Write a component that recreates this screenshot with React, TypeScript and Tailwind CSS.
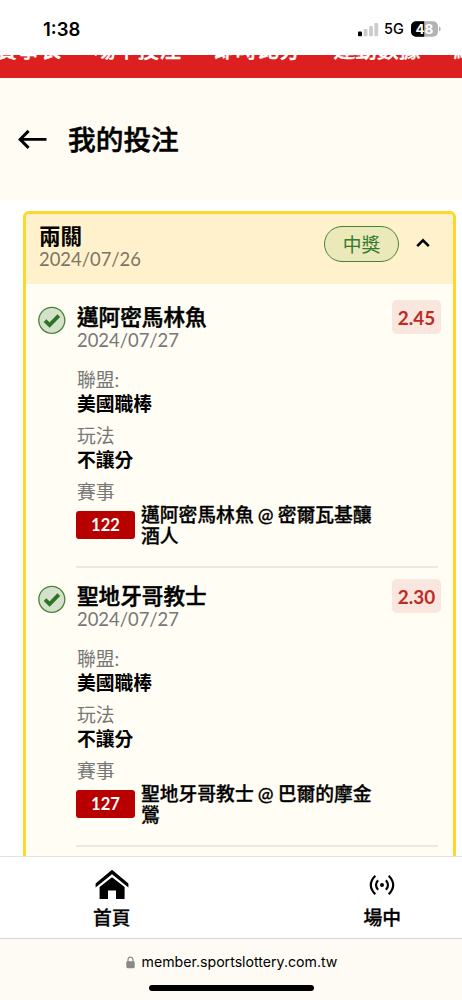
/**
 * MyBetsPage
 * Bet slip history, shown inside the mobile browser frame
 */

import React from 'react';

interface BetLeg {
  id: string;
  pick: string;
  date: string;
  odds: string;
  league: string;
  market: string;
  gameNo: string;
  match: string;
}

const LEGS: BetLeg[] = [
  {
    id: 'leg-122',
    pick: '邁阿密馬林魚',
    date: '2024/07/27',
    odds: '2.45',
    league: '美國職棒',
    market: '不讓分',
    gameNo: '122',
    match: '邁阿密馬林魚 @ 密爾瓦基釀酒人',
  },
  {
    id: 'leg-127',
    pick: '聖地牙哥教士',
    date: '2024/07/27',
    odds: '2.30',
    league: '美國職棒',
    market: '不讓分',
    gameNo: '127',
    match: '聖地牙哥教士 @ 巴爾的摩金鶯',
  },
];

const NAV_ITEMS = ['賽事表', '場中投注', '即時比分', '運動數據', '網站公告'];

const StatusBar: React.FC = () => (
  <div className="h-[55px] shrink-0 bg-white flex items-start justify-between pl-[43px] pr-[21px] pt-[18px] font-[family-name:Inter,sans-serif]">
    <span className="text-[18.5px] leading-[23px] font-semibold text-black">1:38</span>
    <div className="flex items-center h-[22px]">
      <svg width="21" height="15" viewBox="0 0 21 15">
        <rect x="0" y="9.5" width="4" height="4.7" rx="1" fill="#000" />
        <rect x="5.7" y="7" width="3.8" height="7.2" rx="1" fill="#ccc" />
        <rect x="11.1" y="4" width="3.8" height="10.2" rx="1" fill="#ccc" />
        <rect x="16.4" y="1" width="3.8" height="13.2" rx="1" fill="#ccc" />
      </svg>
      <span className="ml-[5px] w-[21px] text-[14.5px] leading-[20px] font-medium text-black">5G</span>
      <svg className="ml-[6px]" width="30" height="16" viewBox="0 0 30 16">
        <rect x="0" y="0.3" width="27" height="15.4" rx="5" fill="#b3b3b3" />
        <path d="M5 .3h8.2v15.4H5a5 5 0 0 1-5-5V5.3a5 5 0 0 1 5-5Z" fill="#000" />
        <path d="M28 5.5q1.7 .8 1.7 2.5t-1.7 2.5Z" fill="#b3b3b3" />
        <text x="13.4" y="12.9" textAnchor="middle" fontSize="13.5" fontWeight="700" fill="#fff">
          48
        </text>
      </svg>
    </div>
  </div>
);

const SiteNav: React.FC = () => (
  <div className="h-[23px] shrink-0 bg-[#dc2020] overflow-hidden">
    <div className="-mt-[19px] -ml-[4px] flex gap-[33px] text-[21.7px] leading-[26px] font-medium text-white whitespace-nowrap [-webkit-text-stroke:0.4px]">
      {NAV_ITEMS.map((item) => (
        <span key={item}>{item}</span>
      ))}
    </div>
  </div>
);

const PageTitle: React.FC = () => (
  <div className="h-[122px] shrink-0 bg-[#fffcf3] flex items-center pl-[18px]">
    <svg width="29" height="22" viewBox="0 0 29 22" fill="none" stroke="#000" strokeWidth="2.9">
      <path d="M28.5 11.4H2M10.6 2.9 2.1 11.4l8.5 8.5" />
    </svg>
    <h1 className="ml-[21px] text-[27.7px] leading-[36px] pt-[1px] font-medium text-black [-webkit-text-stroke:0.5px]">我的投注</h1>
  </div>
);

const CheckBadge: React.FC = () => (
  <svg className="mt-[22px] shrink-0" width="28" height="28" viewBox="0 0 28 28" fill="none">
    <circle cx="13.8" cy="14.3" r="13" fill="#d5e2cb" stroke="#44843a" strokeWidth="1.3" />
    <path d="m7 14.6 4.6 4.4 9.2-9.4" stroke="#2c7421" strokeWidth="3.8" />
  </svg>
);

const Field: React.FC<{ label: string; children: React.ReactNode }> = ({ label, children }) => (
  <div className="h-[56px]">
    <div className="h-[23px] text-[18.8px] leading-[22px] text-[#777]">{label}</div>
    <div className="h-[23px] text-[18.8px] leading-[23px] font-bold text-black">{children}</div>
  </div>
);

const BetLegRow: React.FC<{ leg: BetLeg }> = ({ leg }) => (
  <div className="flex h-[279px] pl-[12px] pr-[12px]">
    <CheckBadge />
    <div className="ml-[10px] w-[362px] h-[284px] shrink-0 pt-[20px]">
      <div className="flex justify-between h-[65px]">
        <div className="pl-[1px]">
          <div className="h-[25px] text-[21.6px] leading-[26px] font-medium text-black [-webkit-text-stroke:0.5px]">{leg.pick}</div>
          <div className="h-[22px] text-[18.4px] leading-[22px] text-[#777]">{leg.date}</div>
        </div>
        <div className="-mt-[4px] -mr-[3px] w-[49px] h-[34px] rounded-[5px] bg-[#f8e6df] text-center text-[18.9px] leading-[35px] font-bold text-[#bd2b23]">
          {leg.odds}
        </div>
      </div>
      <div className="pl-[1px]">
        <Field label="聯盟:">{leg.league}</Field>
        <Field label="玩法">{leg.market}</Field>
        <div className="h-[23px] text-[18.8px] leading-[22px] text-[#777]">賽事</div>
      </div>
      <div className="flex h-[64px] border-b-2 border-[#ece8e3]">
        <div className="mt-[7px] w-[59px] h-[28px] shrink-0 rounded-[3px] bg-[#b90000] text-center text-[16.6px] leading-[28px] font-bold text-white">
          {leg.gameNo}
        </div>
        <div className="ml-[6px] mt-[1px] w-[240px] text-[18.8px] leading-[20.5px] font-medium text-black break-all [word-spacing:-0.6px] [-webkit-text-stroke:0.3px]">
          {leg.match}
        </div>
      </div>
    </div>
  </div>
);

const BetCard: React.FC = () => (
  <div className="mt-[11px] ml-[23px] w-[433px] h-[720px] rounded-[6px] border-[3px] border-[#ffd62b] bg-[#fffdf4] overflow-hidden">
    <div className="h-[70px] bg-[#fff1cb] flex pl-[13px]">
      <div className="flex-1 pt-[9px]">
        <div className="h-[25px] text-[21.6px] leading-[26px] font-bold text-black">兩關</div>
        <div className="h-[22px] text-[18.4px] leading-[22px] text-[#7b7566]">2024/07/26</div>
      </div>
      <div className="mt-[12px] w-[75px] h-[36px] rounded-full border-[1.5px] border-[#44843a] bg-[#ebe8ba] text-center text-[18.8px] leading-[35px] text-[#347c2c]">
        中獎
      </div>
      <svg className="mt-[23px] ml-[17px] mr-[23px]" width="14" height="12" viewBox="0 0 14 12" fill="none" stroke="#000" strokeWidth="2.6">
        <path d="m1.2 9.2 5.8-5.8 5.8 5.8" />
      </svg>
    </div>
    {LEGS.map((leg) => (
      <BetLegRow key={leg.id} leg={leg} />
    ))}
  </div>
);

const BottomTabs: React.FC = () => (
  <div className="h-[82px] shrink-0 bg-white border-t border-[#e2e2e2] flex justify-between pl-[93px] pr-[61px] text-[18.8px] leading-[24px] font-medium text-black [-webkit-text-stroke:0.3px]">
    <div className="flex flex-col items-center">
      <svg className="mt-[12px]" width="34" height="31" viewBox="0 0 34 31">
        <path d="M.6 14.6 17 .7l16.4 13.9v3.8L17 5.3.6 18.4Z" />
        <path d="M17 8.2 29.6 18v12H21v-8.5h-8V30H4.6V18Z" />
      </svg>
      <span className="mt-[6px]">首頁</span>
    </div>
    <div className="flex flex-col items-center">
      <svg className="mt-[17px]" width="26" height="22" viewBox="0 0 26 22" fill="none" stroke="#000" strokeWidth="2.1">
        <circle cx="13" cy="11" r="2" fill="#000" stroke="none" />
        <path d="M9.1 6.3q-4.2 4.7 0 9.4M16.9 6.3q4.2 4.7 0 9.4M6.3 1.7q-9 9.3 0 18.6M19.7 1.7q9 9.3 0 18.6" />
      </svg>
      <span className="mt-[10px]">場中</span>
    </div>
  </div>
);

const BrowserBar: React.FC = () => (
  <div className="h-[62px] shrink-0 border-t border-[#d4d3ce] bg-[#fdfbf3] flex flex-col items-center">
    <div className="mt-[12px] h-[22px] flex items-center pl-[1px] font-[family-name:Inter,sans-serif]">
      <svg width="9" height="13" viewBox="0 0 9 13">
        <rect x="0.3" y="5.2" width="8.4" height="7" rx="1.4" fill="#8a8985" />
        <path d="M2 6V3.7a2.5 2.5 0 0 1 5 0V6" fill="none" stroke="#8a8985" strokeWidth="1.2" />
      </svg>
      <span className="ml-[7px] text-[14.15px] leading-[22px] text-black whitespace-nowrap">member.sportslottery.com.tw</span>
    </div>
    <div className="mt-[12px] w-[165px] h-[6px] rounded-full bg-black" />
  </div>
);

export default function App() {
  return (
    <div lang="zh-Hant" className="w-[462px] h-[1000px] overflow-hidden bg-white flex flex-col font-[family-name:Lato,'Noto_Sans_CJK_TC',sans-serif]">
      <StatusBar />
      <SiteNav />
      <PageTitle />
      <div className="h-[656px] shrink-0 overflow-hidden">
        <BetCard />
      </div>
      <BottomTabs />
      <BrowserBar />
    </div>
  );
}
